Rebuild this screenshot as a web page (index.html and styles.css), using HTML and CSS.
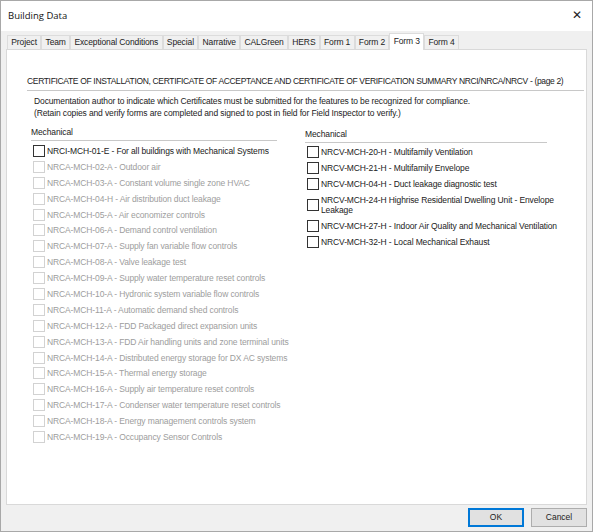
FILE: index.html
```html
<!DOCTYPE html>
<html lang="en">
<head>
    <meta charset="UTF-8">
    <meta name="viewport" content="width=device-width, initial-scale=1.0">
    <title>Building Data</title>
    <link rel="stylesheet" href="styles.css">
</head>
<body>
    <div class="window">
        <div class="titlebar">
            <span class="title">Building Data</span>
            <span class="close">&#x2715;</span>
        </div>

        <div class="frame">
            <div class="tabs">
                <span class="tab">Project</span>
                <span class="tab">Team</span>
                <span class="tab">Exceptional Conditions</span>
                <span class="tab">Special</span>
                <span class="tab">Narrative</span>
                <span class="tab">CALGreen</span>
                <span class="tab">HERS</span>
                <span class="tab">Form 1</span>
                <span class="tab">Form 2</span>
                <span class="tab active">Form 3</span>
                <span class="tab">Form 4</span>
            </div>

            <div class="panel">
                <div class="heading">CERTIFICATE OF INSTALLATION, CERTIFICATE OF ACCEPTANCE AND CERTIFICATE OF VERIFICATION SUMMARY NRCI/NRCA/NRCV - (page 2)</div>
                <p class="note">
                    Documentation author to indicate which Certificates must be submitted for the features to be recognized for compliance.<br>
                    (Retain copies and verify forms are completed and signed to post in field for Field Inspector to verify.)
                </p>

                <div class="columns">
                    <div class="group left">
                        <div class="group-title">Mechanical</div>
                        <label class="item"><span class="box"></span><span class="text">NRCI-MCH-01-E - For all buildings with Mechanical Systems</span></label>
                        <label class="item off"><span class="box"></span><span class="text">NRCA-MCH-02-A - Outdoor air</span></label>
                        <label class="item off"><span class="box"></span><span class="text">NRCA-MCH-03-A - Constant volume single zone HVAC</span></label>
                        <label class="item off"><span class="box"></span><span class="text">NRCA-MCH-04-H - Air distribution duct leakage</span></label>
                        <label class="item off"><span class="box"></span><span class="text">NRCA-MCH-05-A - Air economizer controls</span></label>
                        <label class="item off"><span class="box"></span><span class="text">NRCA-MCH-06-A - Demand control ventilation</span></label>
                        <label class="item off"><span class="box"></span><span class="text">NRCA-MCH-07-A - Supply fan variable flow controls</span></label>
                        <label class="item off"><span class="box"></span><span class="text">NRCA-MCH-08-A - Valve leakage test</span></label>
                        <label class="item off"><span class="box"></span><span class="text">NRCA-MCH-09-A - Supply water temperature reset controls</span></label>
                        <label class="item off"><span class="box"></span><span class="text">NRCA-MCH-10-A - Hydronic system variable flow controls</span></label>
                        <label class="item off"><span class="box"></span><span class="text">NRCA-MCH-11-A - Automatic demand shed controls</span></label>
                        <label class="item off"><span class="box"></span><span class="text">NRCA-MCH-12-A - FDD Packaged direct expansion units</span></label>
                        <label class="item off wide"><span class="box"></span><span class="text">NRCA-MCH-13-A - FDD Air handling units and zone terminal units</span></label>
                        <label class="item off wide"><span class="box"></span><span class="text">NRCA-MCH-14-A - Distributed energy storage for DX AC systems</span></label>
                        <label class="item off"><span class="box"></span><span class="text">NRCA-MCH-15-A - Thermal energy storage</span></label>
                        <label class="item off"><span class="box"></span><span class="text">NRCA-MCH-16-A - Supply air temperature reset controls</span></label>
                        <label class="item off wide"><span class="box"></span><span class="text">NRCA-MCH-17-A - Condenser water temperature reset controls</span></label>
                        <label class="item off"><span class="box"></span><span class="text">NRCA-MCH-18-A - Energy management controls system</span></label>
                        <label class="item off"><span class="box"></span><span class="text">NRCA-MCH-19-A - Occupancy Sensor Controls</span></label>
                    </div>

                    <div class="group right">
                        <div class="group-title">Mechanical</div>
                        <label class="item"><span class="box"></span><span class="text">NRCV-MCH-20-H - Multifamily Ventilation</span></label>
                        <label class="item"><span class="box"></span><span class="text">NRCV-MCH-21-H - Multifamily Envelope</span></label>
                        <label class="item"><span class="box"></span><span class="text">NRCV-MCH-04-H - Duct leakage diagnostic test</span></label>
                        <label class="item wrap"><span class="box"></span><span class="text">NRCV-MCH-24-H Highrise Residential Dwelling Unit - Envelope Leakage</span></label>
                        <label class="item"><span class="box"></span><span class="text">NRCV-MCH-27-H - Indoor Air Quality and Mechanical Ventilation</span></label>
                        <label class="item"><span class="box"></span><span class="text">NRCV-MCH-32-H - Local Mechanical Exhaust</span></label>
                    </div>
                </div>
            </div>

            <div class="footer">
                <button class="btn default">OK</button>
                <button class="btn">Cancel</button>
            </div>
        </div>
    </div>
</body>
</html>
```

FILE: styles.css
```css
* {
    box-sizing: border-box;
}
body {
    margin: 0;
    font-family: "Liberation Sans", Arial, sans-serif;
    font-size: 8.5px;
    letter-spacing: -0.12px;
    color: #222;
}
.window {
    width: 593px;
    height: 532px;
    border: 1px solid #a8a8a8;
    background: #f0f0f0;
    display: flex;
    flex-direction: column;
}
.titlebar {
    height: 30px;
    background: #fff;
    display: flex;
    align-items: center;
    justify-content: space-between;
    padding: 0 10px 2px 7px;
}
.title {
    font-family: "Open Sans", "Liberation Sans", sans-serif;
    font-size: 9.5px;
    letter-spacing: 0;
    color: #111;
}
.close {
    font-size: 12px;
    color: #222;
}
.frame {
    flex: 1;
    display: flex;
    flex-direction: column;
    padding: 3px 5px 0 5px;
}
.tabs {
    display: flex;
    align-items: flex-end;
    height: 15px;
    padding-left: 1px;
}
.tab {
    height: 14px;
    line-height: 13px;
    padding: 0 3.3px;
    border: 1px solid #dcdcdc;
    border-bottom: none;
    background: #f0f0f0;
    color: #222;
    white-space: nowrap;
}
.tab.active {
    height: 17px;
    line-height: 15px;
    background: #fff;
    margin-bottom: -1px;
    position: relative;
}
.panel {
    height: 456px;
    background: #fff;
    border: 1px solid #d9d9d9;
    padding: 26px 2px 0 20px;
}
.heading {
    white-space: nowrap;
    letter-spacing: -0.34px;
    padding-bottom: 4px;
    border-bottom: 1px solid #c8c8c8;
}
.note {
    margin: 4px 0 0 7px;
    line-height: 12px;
}
.columns {
    display: grid;
    grid-template-columns: 246px 242px;
    column-gap: 28px;
    margin-top: 8px;
    padding-left: 4px;
}
.group-title {
    padding-bottom: 3px;
    border-bottom: 1px solid #c8c8c8;
    margin-bottom: 2px;
}
.right .group-title {
    margin-top: 2px;
    margin-bottom: 1px;
}
.item {
    display: flex;
    align-items: center;
    height: 15.9px;
}
.left .item {
    width: 238px;
    overflow: hidden;
}
.left .item.wide {
    width: 258px;
}
.box {
    flex: none;
    width: 12px;
    height: 12px;
    border: 1px solid #333;
    margin-right: 2px;
    margin-left: 2px;
    background: #fff;
}
.text {
    white-space: nowrap;
}
.item.off {
    color: #9d9d9d;
}
.item.off .box {
    border-color: #d2d2d2;
}
.item.wrap {
    height: 26px;
}
.item.wrap .text {
    flex: none;
    white-space: normal;
    width: 240px;
    line-height: 10px;
}
.footer {
    flex: 1;
    display: flex;
    justify-content: flex-end;
    align-items: center;
    gap: 7px;
    padding: 0 0 2px 0;
}
.btn {
    font: inherit;
    width: 56px;
    height: 19px;
    padding: 0;
    border: 1px solid #adadad;
    background: #e1e1e1;
    color: #222;
}
.btn.default {
    border: 2px solid #0078d7;
}
```
